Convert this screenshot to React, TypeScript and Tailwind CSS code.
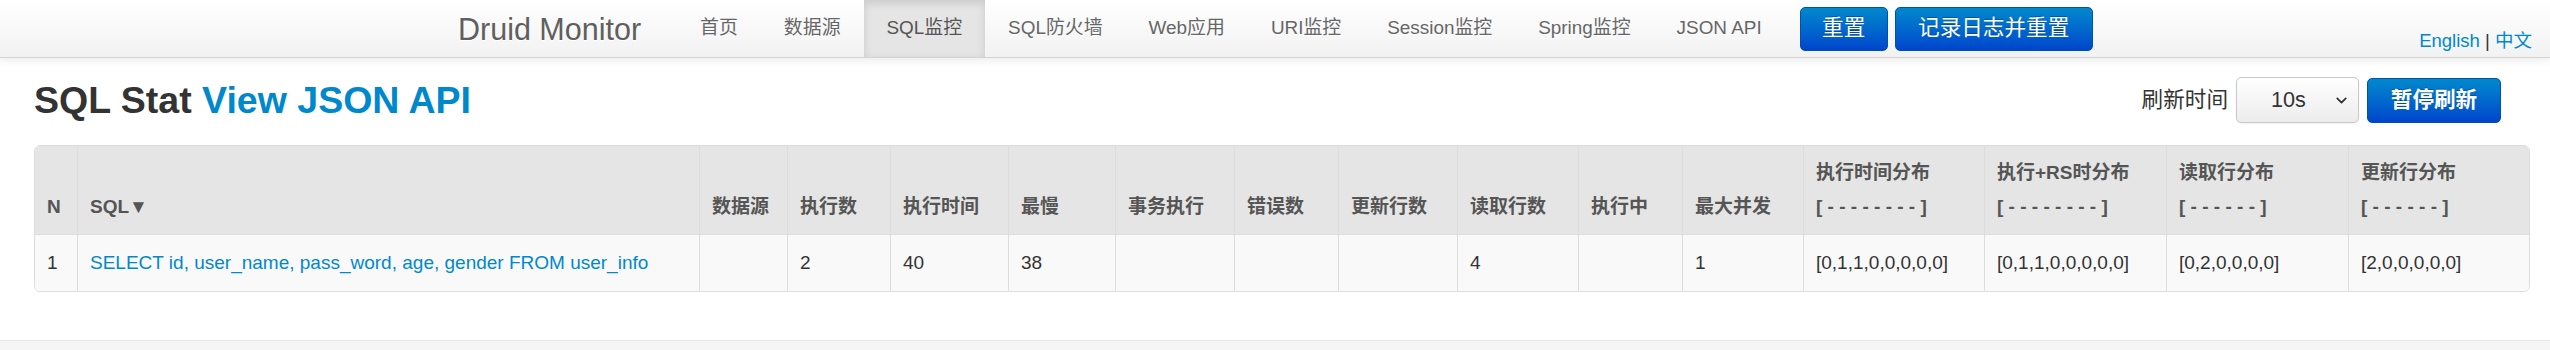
import { ChevronDown } from 'lucide-react'

const navItems = ['首页', '数据源', 'SQL监控', 'SQL防火墙', 'Web应用', 'URI监控', 'Session监控', 'Spring监控', 'JSON API']

const columns = [
  { head: 'N', w: 'w-[42px]' },
  { head: 'SQL▼', w: 'w-[622px]' },
  { head: '数据源', w: 'w-[88px]' },
  { head: '执行数', w: 'w-[103px]' },
  { head: '执行时间', w: 'w-[118px]' },
  { head: '最慢', w: 'w-[107px]' },
  { head: '事务执行', w: 'w-[119px]' },
  { head: '错误数', w: 'w-[104px]' },
  { head: '更新行数', w: 'w-[119px]' },
  { head: '读取行数', w: 'w-[121px]' },
  { head: '执行中', w: 'w-[104px]' },
  { head: '最大并发', w: 'w-[121px]' },
  { head: '执行时间分布', sub: '[ - - - - - - - - ]', w: 'w-[181px]' },
  { head: '执行+RS时分布', sub: '[ - - - - - - - - ]', w: 'w-[182px]' },
  { head: '读取行分布', sub: '[ - - - - - - ]', w: 'w-[182px]' },
  { head: '更新行分布', sub: '[ - - - - - - ]', w: 'w-[181px]' },
]

const row = [
  '1',
  'SELECT id, user_name, pass_word, age, gender FROM user_info',
  '',
  '2',
  '40',
  '38',
  '',
  '',
  '',
  '4',
  '',
  '1',
  '[0,1,1,0,0,0,0,0]',
  '[0,1,1,0,0,0,0,0]',
  '[0,2,0,0,0,0]',
  '[2,0,0,0,0,0]',
]

const Navbar = () => {
  return (
    <div className="relative h-[58px] border-b border-[#d4d4d4] bg-linear-to-b from-white to-[#f2f2f2] shadow-[0_1px_10px_rgba(0,0,0,0.1)]">
      <div className="mx-auto flex h-full w-[1634px] items-center whitespace-nowrap">
        <div className="mr-[36px] shrink-0 text-[30.5px] leading-[40px] text-[#5f5f5f] [text-shadow:0_1px_0_#fff]">Druid Monitor</div>
        {navItems.map((item) => (
          <div
            key={item}
            className={
              item === 'SQL监控'
                ? 'flex h-full shrink-0 items-center bg-[#e5e5e5] px-[23px] text-[18.9px] text-[#555] shadow-[inset_0_3px_8px_rgba(0,0,0,0.125)]'
                : 'flex h-full shrink-0 items-center px-[23px] text-[18.9px] text-[#666] [text-shadow:0_1px_0_#fff]'
            }
          >
            {item}
          </div>
        ))}
        <div className="ml-[15px] flex shrink-0 gap-[7px]">
          <button className="h-[44px] w-[88px] shrink-0 rounded-[5px] border border-[#0050b0] bg-linear-to-b from-[#0088cc] to-[#0044cc] text-[21.6px] text-white [text-shadow:0_-1px_0_rgba(0,0,0,0.25)]">
            重置
          </button>
          <button className="h-[44px] w-[198px] shrink-0 rounded-[5px] border border-[#0050b0] bg-linear-to-b from-[#0088cc] to-[#0044cc] text-[21.6px] text-white [text-shadow:0_-1px_0_rgba(0,0,0,0.25)]">
            记录日志并重置
          </button>
        </div>
      </div>
      <div className="absolute right-[18px] top-[29px] text-[18.5px] leading-[24px]">
        <a className="text-[#0088cc]">English</a>
        <span className="text-[#333]"> | </span>
        <a className="text-[#0088cc]">中文</a>
      </div>
    </div>
  )
}

const App = () => {
  return (
    <div className="h-[350px] overflow-hidden bg-white font-['Liberation_Sans','Noto_Sans_CJK_SC',sans-serif] text-[#333]">
      <Navbar />
      <div className="pl-[34px] pr-[20px]">
        <div className="mt-[19px] flex h-[46px] items-center justify-between pr-[29px]">
          <h2 className="text-[37.5px] font-bold leading-[46px] text-[#333]">
            SQL Stat <a className="text-[#0088cc]">View JSON API</a>
          </h2>
          <div className="flex items-center gap-[8px]">
            <span className="text-[21.6px] text-[#333]">刷新时间</span>
            <div className="flex h-[46px] w-[123px] items-center justify-between rounded-[5px] border border-[#c8c8c8] bg-linear-to-b from-white to-[#ececec] pl-[34px] pr-[8px] text-[21.6px] text-[#333] shadow-[0_1px_2px_rgba(0,0,0,0.05)]">
              <span>10s</span>
              <ChevronDown size={17} strokeWidth={2.5} className="text-[#333]" />
            </div>
            <button className="h-[45px] w-[134px] rounded-[5px] border border-[#0050b0] bg-linear-to-b from-[#0088cc] to-[#0044cc] text-[21.6px] font-bold text-white [text-shadow:0_-1px_0_rgba(0,0,0,0.25)]">
              暂停刷新
            </button>
          </div>
        </div>

        <div className="mt-[22px] overflow-hidden rounded-[6px] border border-[#ddd]">
          <table className="w-full table-fixed border-separate border-spacing-0 text-left">
            <colgroup>
              {columns.map((c) => (
                <col key={c.head} className={c.w} />
              ))}
            </colgroup>
            <thead>
              <tr className="bg-[#e5e5e5]">
                {columns.map((c, i) => (
                  <th
                    key={c.head}
                    className={
                      (i === 0 ? '' : 'border-l border-[#ddd] ') +
                      'px-[12px] py-[10px] align-bottom text-[19px] font-bold leading-[34px] text-[#555] whitespace-nowrap'
                    }
                  >
                    {c.head}
                    {c.sub && (
                      <>
                        <br />
                        {c.sub}
                      </>
                    )}
                  </th>
                ))}
              </tr>
            </thead>
            <tbody>
              <tr className="bg-[#f9f9f9]">
                {row.map((v, i) => (
                  <td
                    key={i}
                    className={
                      (i === 0 ? '' : 'border-l ') +
                      'border-t border-[#ddd] px-[12px] py-[11px] text-[19px] leading-[34px] whitespace-nowrap'
                    }
                  >
                    {i === 1 ? <a className="text-[#0088cc]">{v}</a> : v}
                  </td>
                ))}
              </tr>
            </tbody>
          </table>
        </div>
      </div>
      <div className="mt-[48px] h-[12px] border-t border-[#e5e5e5] bg-[#f5f5f5]" />
    </div>
  )
}

export default App
